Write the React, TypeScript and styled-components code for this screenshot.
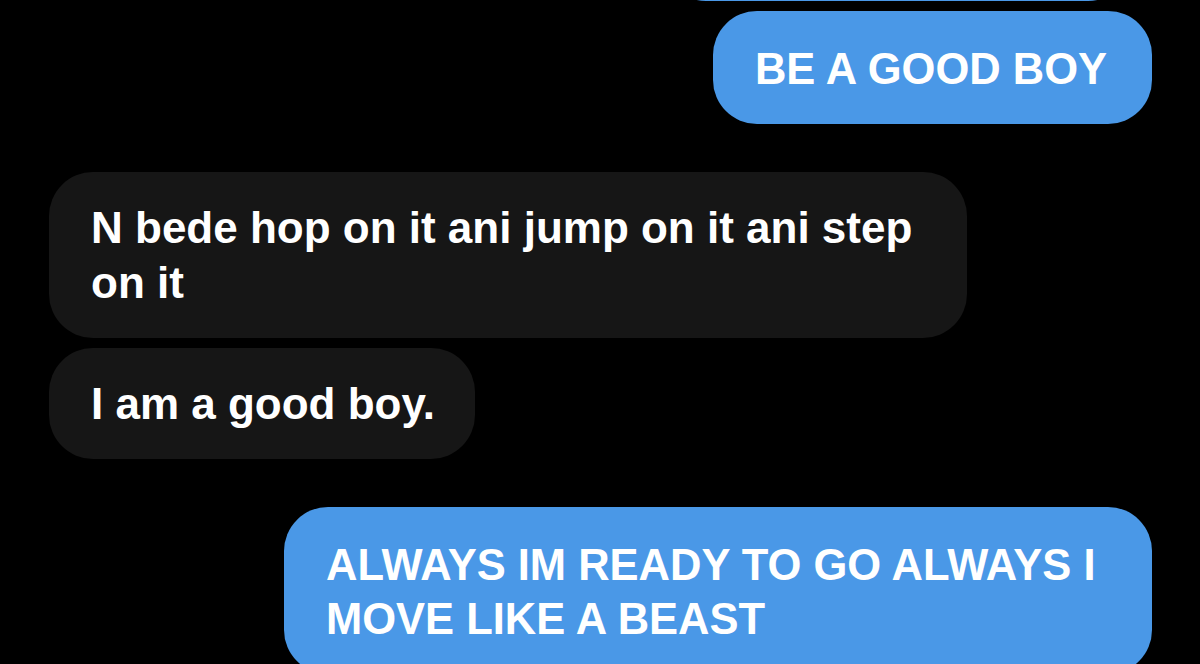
import styled, { createGlobalStyle } from 'styled-components'

const GlobalStyle = createGlobalStyle`
    html, body {
        margin: 0;
        padding: 0;
        background: #000000;
        overflow: hidden;
    }
    body {
        font-family: "Liberation Sans", Arial, sans-serif;
    }
`

const Screen = styled.div`
    width: 1200px;
    height: 664px;
    overflow: hidden;
    background-color: #000000;
`

const Thread = styled.div`
    display: flex;
    flex-direction: column;
    padding: 0 48px 0 49px;
    margin-top: -111px;
`

type Side = 'me' | 'them'

const Bubble = styled.div<{ $side: Side; $grouped?: boolean }>`
    box-sizing: border-box;
    width: fit-content;
    margin-top: ${p => (p.$grouped ? '10px' : '48px')};
    border-radius: 44px;
    color: #ffffff;
    font-weight: 700;
    align-self: ${p => (p.$side === 'me' ? 'flex-end' : 'flex-start')};
    background-color: ${p => (p.$side === 'me' ? '#4a98e7' : '#161616')};
    max-width: ${p => (p.$side === 'me' ? '868px' : '918px')};
    font-size: ${p => (p.$side === 'me' ? '43.5px' : '44px')};
    line-height: ${p => (p.$side === 'me' ? '54px' : '55px')};
    padding: ${p => (p.$side === 'me' ? '31px 45px 28px 42px' : '28px 40px 28px 42px')};

    &:first-child {
        margin-top: 0;
    }
`

const Stub = styled(Bubble)`
    width: 470px;
    height: 112px;
    margin-right: 20px;
`

type Message = { side: Side; text: string; grouped?: boolean }

const messages: Message[] = [
    { side: 'me', text: 'BE A GOOD BOY', grouped: true },
    { side: 'them', text: 'N bede hop on it ani jump on it ani step on it' },
    { side: 'them', text: 'I am a good boy.', grouped: true },
    { side: 'me', text: 'ALWAYS IM READY TO GO ALWAYS I MOVE LIKE A BEAST' },
]

export default function App() {
    return (
        <Screen>
            <GlobalStyle />
            <Thread>
                <Stub $side="me" />
                {messages.map((m, i) => (
                    <Bubble key={i} $side={m.side} $grouped={m.grouped}>
                        {m.text}
                    </Bubble>
                ))}
            </Thread>
        </Screen>
    )
}
